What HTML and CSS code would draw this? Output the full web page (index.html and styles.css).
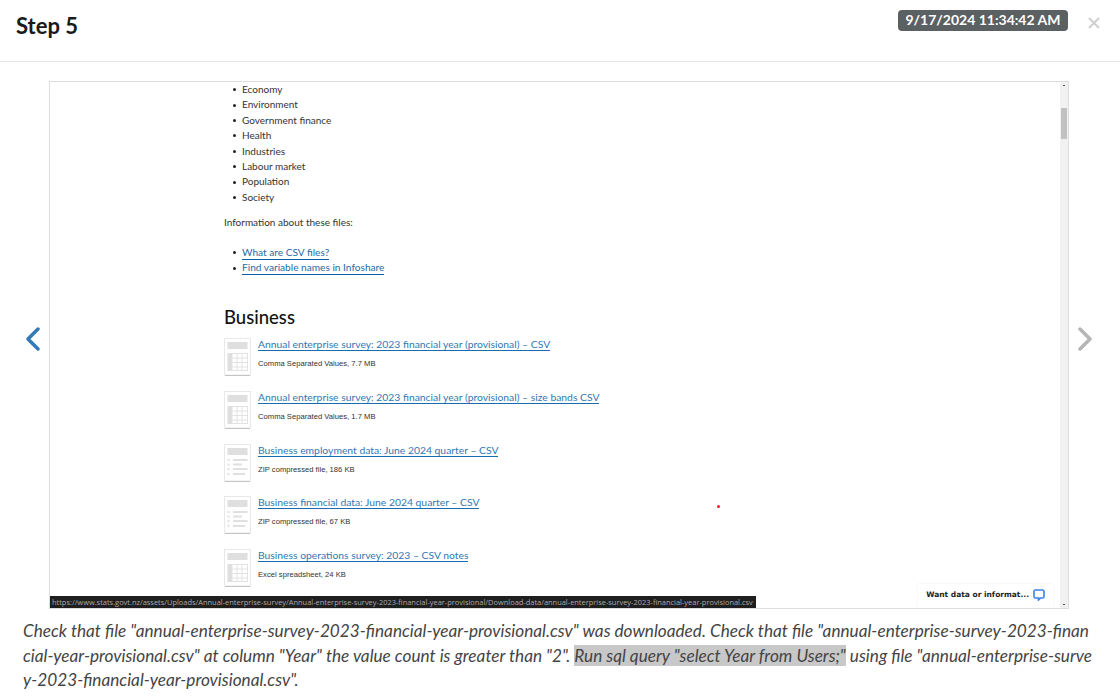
FILE: index.html
```html
<!DOCTYPE html>
<html lang="en">
<head>
  <meta charset="UTF-8">
  <title>Step 5</title>
  <link rel="stylesheet" href="styles.css">
</head>
<body>
  <svg class="sprites" width="0" height="0">
    <symbol id="icon-sheet" viewBox="0 0 27 38">
      <rect x="0.5" y="0.5" width="26" height="36.5" fill="#fff" stroke="#e8e8e8"/>
      <path d="M1 37.5h25" stroke="#c4c4c4"/>
      <rect x="3.5" y="4" width="20" height="7" fill="#dfdfdf"/>
      <rect x="3.5" y="15" width="5" height="18" fill="#dfdfdf"/>
      <path d="M8.5 15.5h15M8.5 20h15M8.5 24.500h15M8.5 29h15M8.500 32.500h15M13 15v18M18 15v18M23.500 15v18" stroke="#e2e2e2" fill="none"/>
    </symbol>
    <symbol id="icon-zip" viewBox="0 0 27 38">
      <rect x="0.5" y="0.5" width="26" height="36.5" fill="#fff" stroke="#e8e8e8"/>
      <path d="M1 37.5h25" stroke="#c4c4c4"/>
      <rect x="3.500" y="4" width="20" height="7" fill="#dfdfdf"/>
      <path d="M3.500 16h2M9 16h14.500M3.500 20.500h2M9 20.500h9M3.500 25h2M9 25h14.500M3.500 30h2M9 30h12" stroke="#e0e0e0" stroke-width="2" fill="none"/>
    </symbol>
  </svg>

  <header class="modal-header">
    <h1 class="modal-title">Step 5</h1>
    <span class="timestamp">9/17/2024 11:34:42 AM</span>
    <button class="close" aria-label="Close">
      <svg width="14" height="14" viewBox="0 0 14 14"><path d="M2 2l10 10M12 2L2 12" stroke="#cfcfcf" stroke-width="2" fill="none"/></svg>
    </button>
  </header>

  <main class="viewer">
    <div class="nav nav--prev">
      <svg width="16" height="24" viewBox="0 0 16 24"><path d="M13 2L3 12l10 10" stroke="#337ab7" stroke-width="3.500" fill="none" stroke-linecap="round" stroke-linejoin="round"/></svg>
    </div>

    <div class="shot">
      <div class="page">
        <ul class="topics">
          <li>Economy</li>
          <li>Environment</li>
          <li>Government finance</li>
          <li>Health</li>
          <li>Industries</li>
          <li>Labour market</li>
          <li>Population</li>
          <li>Society</li>
        </ul>
        <p class="intro">Information about these files:</p>
        <ul class="topics topics--links">
          <li><a>What are CSV files?</a></li>
          <li><a>Find variable names in Infoshare</a></li>
        </ul>
        <h2 class="section-title">Business</h2>
        <div class="file">
          <svg class="file__icon"><use href="#icon-sheet"/></svg>
          <div>
            <a class="file__link">Annual enterprise survey: 2023 financial year (provisional) – CSV</a>
            <div class="file__meta">Comma Separated Values, 7.7 MB</div>
          </div>
        </div>
        <div class="file">
          <svg class="file__icon"><use href="#icon-sheet"/></svg>
          <div>
            <a class="file__link">Annual enterprise survey: 2023 financial year (provisional) – size bands CSV</a>
            <div class="file__meta">Comma Separated Values, 1.7 MB</div>
          </div>
        </div>
        <div class="file">
          <svg class="file__icon"><use href="#icon-zip"/></svg>
          <div>
            <a class="file__link">Business employment data: June 2024 quarter – CSV</a>
            <div class="file__meta">ZIP compressed file, 186 KB</div>
          </div>
        </div>
        <div class="file">
          <svg class="file__icon"><use href="#icon-zip"/></svg>
          <div>
            <a class="file__link">Business financial data: June 2024 quarter – CSV</a>
            <div class="file__meta">ZIP compressed file, 67 KB</div>
          </div>
        </div>
        <div class="file">
          <svg class="file__icon"><use href="#icon-sheet"/></svg>
          <div>
            <a class="file__link">Business operations survey: 2023 – CSV notes</a>
            <div class="file__meta">Excel spreadsheet, 24 KB</div>
          </div>
        </div>
      </div>

      <div class="scrollbar">
        <span class="scrollbar__arrow"></span>
        <span class="scrollbar__thumb"></span>
        <span class="scrollbar__arrow scrollbar__arrow--end"></span>
      </div>

      <div class="cursor-dot"></div>
      <div class="status-link">https://www.stats.govt.nz/assets/Uploads/Annual-enterprise-survey/Annual-enterprise-survey-2023-financial-year-provisional/Download-data/annual-enterprise-survey-2023-financial-year-provisional.csv</div>
      <div class="chat">
        <span>Want data or informat...</span>
        <svg width="12" height="12" viewBox="0 0 12 12"><path d="M2.500 1h7A1.500 1.500 0 0 1 11 2.500v5A1.500 1.500 0 0 1 9.500 9H7.500L5.500 11V9h-3A1.500 1.500 0 0 1 1 7.500v-5A1.500 1.500 0 0 1 2.500 1z" fill="#fff" stroke="#3b82e6" stroke-width="1.600"/></svg>
      </div>
    </div>

    <div class="nav nav--next">
      <svg width="16" height="24" viewBox="0 0 16 24"><path d="M3 2l10 10L3 22" stroke="#b5b5b5" stroke-width="3.500" fill="none" stroke-linecap="round" stroke-linejoin="round"/></svg>
    </div>
  </main>

  <p class="caption">Check that file "annual-enterprise-survey-2023-financial-year-provisional.csv" was downloaded. Check that file "annual-enterprise-survey-2023-financial-year-provisional.csv" at column "Year" the value count is greater than "2". <mark class="caption__mark">Run sql query "select Year from Users;"</mark> using file "annual-enterprise-survey-2023-financial-year-provisional.csv".</p>
</body>
</html>
```
FILE: styles.css
```css
body {
  margin: 0;
  height: 700px;
  overflow: hidden;
  background: #fff;
  font-family: "Lato", sans-serif;
}
.sprites {
  display: block;
}

/* header */
.modal-header {
  display: flex;
  align-items: flex-start;
  height: 51px;
  padding: 10px 19px 0 16px;
  border-bottom: 1px solid #e5e5e5;
}
.modal-title {
  flex: 1;
  margin: 0;
  font-size: 22px;
  font-weight: 700;
  line-height: 31px;
  color: #1a1a1a;
}
.timestamp {
  padding: 0 7.500px;
  height: 21px;
  line-height: 20px;
  border-radius: 4px;
  background: #5b6062;
  color: #fff;
  font-size: 14px;
  font-weight: 700;
  white-space: nowrap;
}
.close {
  margin: 6px 0 0 19px;
  padding: 0;
  border: 0;
  background: none;
  line-height: 0;
}

/* screenshot viewer */
.viewer {
  display: flex;
  align-items: center;
  padding-top: 19px;
}
.nav {
  display: flex;
  margin-bottom: 13px;
}
.nav--prev {
  width: 49px;
  justify-content: flex-end;
  padding-right: 8px;
  box-sizing: border-box;
}
.nav--next {
  width: 51px;
  padding-left: 8px;
  box-sizing: border-box;
}
.shot {
  position: relative;
  display: flex;
  width: 1020px;
  height: 528px;
  box-sizing: border-box;
  border: 1px solid #dedede;
  overflow: hidden;
}
.page {
  flex: 1;
  padding-left: 174px;
  font-size: 10px;
  color: #333;
}
.topics {
  margin: 0;
  padding: 0 0 0 9px;
  list-style: none;
  line-height: 15.4px;
}
.topics li {
  display: flex;
  align-items: center;
  gap: 6px;
  min-height: 15.4px;
}
.topics li::before {
  content: "";
  width: 3px;
  height: 3px;
  border-radius: 50%;
  background: #222;
}
.topics--links li {
  font-size: 10.150px;
}
.topics--links a {
  color: #1f6aa8;
  border-bottom: 1px solid #0b5ea8;
  line-height: 13px;
}
.intro {
  margin: 10px 0 14.5px;
  line-height: 15.4px;
}
.section-title {
  margin: 30.200px 0 10px;
  font-size: 18.500px;
  font-weight: 500;
  line-height: 22px;
  color: #111;
}
.file {
  display: flex;
  gap: 7px;
  height: 52.700px;
}
.file__icon {
  width: 27px;
  height: 38px;
  flex: none;
}
.file__link {
  color: #2f78b4;
  border-bottom: 1px solid #1a6cb0;
  font-size: 10.350px;
  line-height: 12px;
  white-space: nowrap;
}
.file__meta {
  margin-top: 8px;
  font-family: "Liberation Sans", sans-serif;
  font-size: 7.650px;
  line-height: 11px;
  color: #333;
}

.scrollbar {
  display: flex;
  flex-direction: column;
  align-items: center;
  width: 8px;
  background: #f1f1f1;
}
.scrollbar__arrow {
  width: 2px;
  height: 1px;
  margin-top: 3px;
  background: #505050;
}
.scrollbar__arrow--end {
  margin-top: auto;
  margin-bottom: 3px;
}
.scrollbar__thumb {
  width: 6px;
  height: 31px;
  margin-top: 22px;
  background: #c1c1c1;
}

/* things lying over the captured page */
.cursor-dot {
  position: absolute;
  left: 667px;
  top: 423px;
  width: 3px;
  height: 3px;
  border-radius: 50%;
  background: #f01824;
}
.status-link {
  position: absolute;
  left: 0;
  bottom: 0;
  width: 706px;
  height: 12px;
  padding-left: 2px;
  box-sizing: border-box;
  background: #1f1f1f;
  color: #aaa;
  font-family: "Open Sans", sans-serif;
  font-size: 7.450px;
  line-height: 12px;
  white-space: nowrap;
  overflow: hidden;
}
.chat {
  position: absolute;
  right: 15px;
  bottom: 0;
  display: flex;
  align-items: center;
  gap: 4px;
  height: 21px;
  padding: 0 8px 3px;
  background: #fff;
  box-shadow: 0 0 2px rgba(0, 0, 0, 0.08);
  font-family: "DejaVu Sans", sans-serif;
  font-size: 7.500px;
  font-weight: 700;
  color: #222;
  white-space: nowrap;
}

/* caption */
.caption {
  width: 1070px;
  margin: 10px 0 0 23px;
  font-size: 17.200px;
  font-style: italic;
  line-height: 24.500px;
  color: #444;
  word-break: break-all;
}
.caption__mark {
  background: #c8c8c8;
  color: #444;
}
```
